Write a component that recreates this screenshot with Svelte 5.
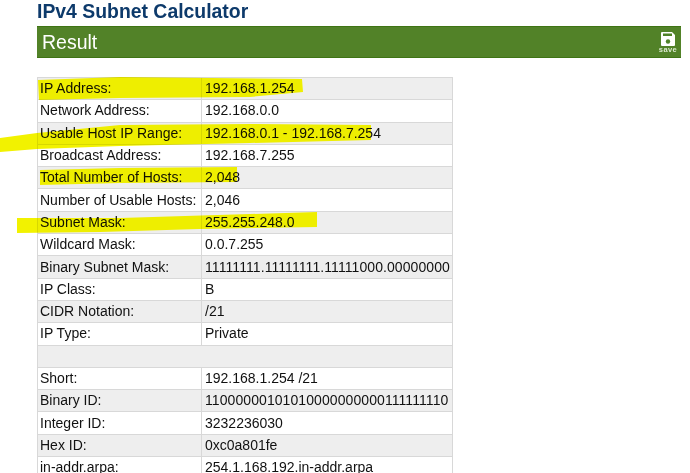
<script>
	const rows = [
		['IP Address:', '192.168.1.254'],
		['Network Address:', '192.168.0.0'],
		['Usable Host IP Range:', '192.168.0.1 - 192.168.7.254'],
		['Broadcast Address:', '192.168.7.255'],
		['Total Number of Hosts:', '2,048'],
		['Number of Usable Hosts:', '2,046'],
		['Subnet Mask:', '255.255.248.0'],
		['Wildcard Mask:', '0.0.7.255'],
		['Binary Subnet Mask:', '11111111.11111111.11111000.00000000', true],
		['IP Class:', 'B'],
		['CIDR Notation:', '/21'],
		['IP Type:', 'Private'],
		null,
		['Short:', '192.168.1.254 /21'],
		['Binary ID:', '11000000101010000000000111111110', true],
		['Integer ID:', '3232236030'],
		['Hex ID:', '0xc0a801fe'],
		['in-addr.arpa:', '254.1.168.192.in-addr.arpa']
	];

	// marker strokes someone drew over the screenshot
	const strokes = [
		'M38 80 L120 77 L302 79 L303 92 L250 97 L120 98 L39 100 Z',
		'M0 138 L37 133 L120 125 L250 124 L371 125 L371 140 L250 143 L120 146 L37 149 L0 152 Z',
		'M40 170 L120 168 L237 167 L237 182 L120 183 L40 185 Z',
		'M17 218 L120 218 L250 214 L317 212 L317 227 L200 229 L100 232 L17 233 Z'
	];
</script>

<div class="page">
	<h1>IPv4 Subnet Calculator</h1>
	<div class="result-bar">
		<h2>Result</h2>
		<div class="save">
			<svg width="14" height="14" viewBox="0 0 14 14">
				<path d="M1 0H11L14 3V13Q14 14 13 14H1Q0 14 0 13V1Q0 0 1 0Z" fill="#fff" />
				<rect x="2" y="1.5" width="9" height="2.5" fill="#4f8228" />
				<circle cx="7" cy="9.5" r="2.2" fill="#4f8228" />
			</svg>
			<span>save</span>
		</div>
	</div>

	<table>
		<tbody>
			{#each rows as row}
				<tr>
					{#if row}
						<td class="label">{row[0]}</td>
						<td class:binary={row[2]}>{row[1]}</td>
					{:else}
						<td colspan="2"></td>
					{/if}
				</tr>
			{/each}
		</tbody>
	</table>

	<svg class="marker" width="690" height="473" viewBox="0 0 690 473">
		{#each strokes as d}
			<path {d} fill="#f2f200" />
		{/each}
	</svg>
</div>

<style>
	:global(body) {
		background: #fff;
	}

	.page {
		position: relative;
		width: 690px;
		height: 473px;
		overflow: hidden;
		padding: 0 9px 0 37px;
		box-sizing: border-box;
		font-family: 'Liberation Sans', Arial, sans-serif;
		color: #111;
	}

	h1 {
		margin: 0;
		height: 26px;
		line-height: 22px;
		font-size: 19.4px;
		font-weight: bold;
		color: #0d3a6b;
	}

	.result-bar {
		display: flex;
		align-items: center;
		justify-content: space-between;
		height: 32px;
		padding: 0 3px 0 5px;
		box-sizing: border-box;
		background: #528228;
		border-top: 1px solid #3f7414;
		border-bottom: 1px solid #3f7414;
		color: #fff;
	}

	h2 {
		margin: 0;
		font-size: 19.5px;
		font-weight: normal;
	}

	.save {
		display: flex;
		flex-direction: column;
		align-items: center;
		width: 20px;
		padding-top: 1px;
		font-size: 7.5px;
		line-height: 7px;
		font-weight: bold;
		letter-spacing: 0.4px;
		color: #dcead0;
	}

	table {
		margin-top: 19px;
		width: 416px;
		border-collapse: collapse;
		table-layout: fixed;
		font-size: 14px;
		border: 1px solid #d0d0d0;
	}

	tr {
		height: 22.3px;
	}

	tr:nth-child(odd) {
		background: #eee;
	}

	td {
		padding: 0 3px 1px;
		border: 1px solid #d8d8d8;
		white-space: nowrap;
		line-height: 16px;
	}

	.label {
		width: 158px;
		padding-left: 2px;
	}

	.binary {
		letter-spacing: 0.08px;
	}

	.marker {
		position: absolute;
		left: 0;
		top: 0;
		mix-blend-mode: darken;
		pointer-events: none;
	}
</style>
